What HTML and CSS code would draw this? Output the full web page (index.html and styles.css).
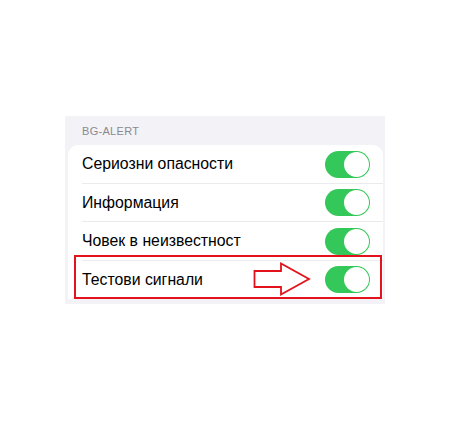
FILE: index.html
```html
<!DOCTYPE html>
<html>
<head>
<meta charset="utf-8">
<link rel="stylesheet" href="styles.css">
</head>
<body>
<div class="panel">
  <div class="header">BG-ALERT</div>
  <div class="card">
    <div class="row">
      <span class="label">Сериозни опасности</span>
      <span class="toggle"><span class="knob"></span></span>
    </div>
    <div class="row">
      <span class="label">Информация</span>
      <span class="toggle"><span class="knob"></span></span>
    </div>
    <div class="row">
      <span class="label">Човек в неизвестност</span>
      <span class="toggle"><span class="knob"></span></span>
    </div>
    <div class="row last">
      <span class="label">Тестови сигнали</span>
      <svg class="arrow" width="60" height="36" viewBox="0 0 60 36">
        <polygon points="1.5,9 28,9 28,1.5 56,17 28,32.5 28,25 1.5,25" fill="#fff" stroke="#e3121c" stroke-width="1.8" stroke-linejoin="miter"/>
      </svg>
      <span class="toggle"><span class="knob"></span></span>
      <div class="highlight"></div>
    </div>
  </div>
</div>
</body>
</html>
```
FILE: styles.css
```css
html, body {
  margin: 0;
  padding: 0;
  background: #ffffff;
}
body {
  font-family: "Liberation Sans", Arial, sans-serif;
  padding-top: 116px;
  padding-left: 65px;
}
.panel {
  width: 320px;
  height: 188px;
  background: #f2f2f7;
  box-sizing: border-box;
  padding: 0 2px 0 3px;
}
.header {
  height: 29px;
  box-sizing: border-box;
  padding: 9px 0 0 14px;
  font-size: 11px;
  color: #8a8a8e;
  letter-spacing: 0.3px;
}
.card {
  background: #ffffff;
  border-radius: 10px 10px 0 0;
  padding-left: 14px;
}
.row {
  position: relative;
  height: 38.5px;
  display: flex;
  align-items: center;
  padding-right: 13px;
  box-shadow: inset 0 -0.5px 0 #d8d8dc;
}
.row.last {
  box-shadow: none;
}
.label {
  flex: 1;
  font-size: 15.8px;
  color: #000000;
}
.toggle {
  position: relative;
  width: 45px;
  height: 27px;
  border-radius: 14px;
  background: #34c759;
  flex: none;
}
.knob {
  position: absolute;
  right: 1px;
  top: 1px;
  width: 25px;
  height: 25px;
  border-radius: 50%;
  background: #ffffff;
}
.arrow {
  position: absolute;
  left: 171px;
  top: 1px;
}
.highlight {
  position: absolute;
  left: -8px;
  top: -6px;
  width: 308px;
  height: 44px;
  box-sizing: border-box;
  border: 2px solid #e3121c;
}
```
